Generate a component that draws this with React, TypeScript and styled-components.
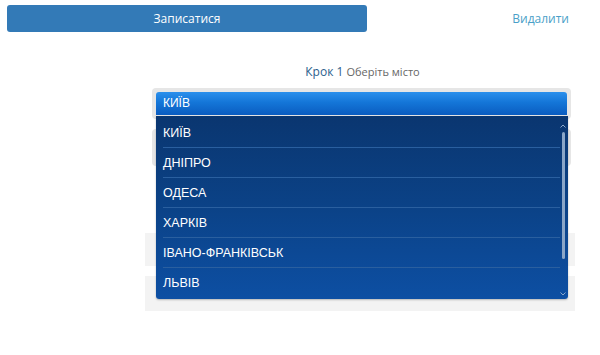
import React from 'react';
import styled, { createGlobalStyle } from 'styled-components';

const GlobalStyle = createGlobalStyle`
  html, body {
    margin: 0;
    padding: 0;
    background: #fff;
  }
  body {
    font-family: "Open Sans", "Liberation Sans", sans-serif;
  }
`;

const Page = styled.div`
  width: 600px;
  height: 355px;
  overflow: hidden;
`;

const TopBar = styled.div`
  display: flex;
  align-items: center;
  justify-content: space-between;
  padding: 5px 31px 0 7px;
`;

const SignUpButton = styled.button`
  width: 360px;
  height: 27px;
  border: none;
  border-radius: 3px;
  background: #337ab7;
  color: #fff;
  font-family: "Open Sans", sans-serif;
  font-size: 12px;
  padding: 0;
  cursor: pointer;
`;

const RemoveLink = styled.a`
  color: #4a9fc8;
  font-size: 12px;
  text-decoration: none;
  cursor: pointer;
`;

const Form = styled.div`
  position: relative;
  margin: 32px 0 0 145px;
  width: 430px;
`;

const StepTitle = styled.div`
  text-align: center;
  font-size: 12px;
  color: #2c5e8c;
  padding-left: 5px;
  line-height: 16px;
`;

const StepHint = styled.span`
  color: #666;
  font-size: 11px;
`;

const Field = styled.div<{ $gap: number; $height: number }>`
  margin: ${p => p.$gap}px 4px 0 7px;
  height: ${p => p.$height}px;
  border-radius: 4px;
  background: #e6e6e6;
  box-sizing: border-box;
  padding: 4px;
`;

const Block = styled.div<{ $gap: number; $height: number }>`
  margin-top: ${p => p.$gap}px;
  height: ${p => p.$height}px;
  background: #f3f3f3;
`;

const SelectedBar = styled.div`
  height: 23px;
  border-radius: 3px 3px 0 0;
  background: linear-gradient(to bottom, #2b90ec 0%, #1476d8 45%, #0a5cc0 100%);
  color: #fff;
  font-family: "Liberation Sans", Arial, sans-serif;
  font-size: 12px;
  line-height: 23px;
  padding-left: 7px;
`;

const Dropdown = styled.div`
  position: absolute;
  top: 52px;
  left: 11px;
  width: 412px;
  height: 183px;
  border-radius: 0 0 3px 3px;
  background: linear-gradient(to bottom, #0a3670 0%, #0b4287 50%, #0d4fa3 100%);
  box-shadow: 0 1px 2px rgba(0, 0, 0, 0.25);
  padding-top: 2px;
  box-sizing: border-box;
`;

const Option = styled.div<{ $last?: boolean }>`
  height: 30px;
  margin: 0 8px 0 7px;
  border-bottom: 1px solid ${p => (p.$last ? 'transparent' : '#2a5f9f')};
  box-sizing: border-box;
  color: #fff;
  font-family: "Liberation Sans", Arial, sans-serif;
  font-size: 12.5px;
  line-height: 30px;
`;

const ScrollTrack = styled.div`
  position: absolute;
  top: 8px;
  right: 2px;
  bottom: 3px;
  width: 6px;
  display: flex;
  flex-direction: column;
  align-items: center;
`;

const ScrollThumb = styled.div`
  width: 3px;
  height: 127px;
  margin-top: 4px;
  border-radius: 2px;
  background: #8aa6c8;
`;

const Arrow = styled.svg<{ $bottom?: boolean }>`
  width: 6px;
  height: 4px;
  margin-top: ${p => (p.$bottom ? 'auto' : '0')};
`;

const cities = ['КИЇВ', 'ДНІПРО', 'ОДЕСА', 'ХАРКІВ', 'ІВАНО-ФРАНКІВСЬК', 'ЛЬВІВ'];

export default function App() {
  return (
    <Page>
      <GlobalStyle />
      <TopBar>
        <SignUpButton>Записатися</SignUpButton>
        <RemoveLink>Видалити</RemoveLink>
      </TopBar>
      <Form>
        <StepTitle>
          Крок 1 <StepHint>Оберіть місто</StepHint>
        </StepTitle>
        <Field $gap={8} $height={31}>
          <SelectedBar>КИЇВ</SelectedBar>
        </Field>
        <Field $gap={10} $height={37} />
        <Block $gap={67} $height={33} />
        <Block $gap={10} $height={35} />
        <Dropdown>
          {cities.map((c, i) => (
            <Option key={c} $last={i === cities.length - 1}>
              {c}
            </Option>
          ))}
          <ScrollTrack>
            <Arrow viewBox="0 0 6 4">
              <path d="M0.5 3.5 L3 1 L5.5 3.5" stroke="#8aa6c8" strokeWidth="1" fill="none" />
            </Arrow>
            <ScrollThumb />
            <Arrow $bottom viewBox="0 0 6 4">
              <path d="M0.5 0.5 L3 3 L5.5 0.5" stroke="#8aa6c8" strokeWidth="1" fill="none" />
            </Arrow>
          </ScrollTrack>
        </Dropdown>
      </Form>
    </Page>
  );
}
